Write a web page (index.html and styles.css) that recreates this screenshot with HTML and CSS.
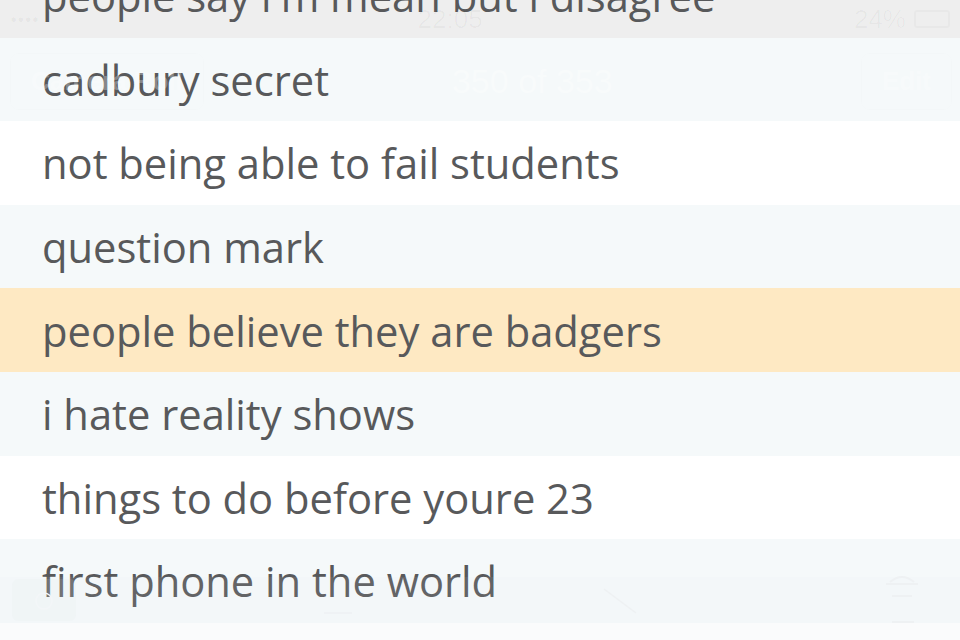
FILE: index.html
```html
<!DOCTYPE html>
<html>
<head>
<meta charset="utf-8">
<link rel="stylesheet" href="styles.css">
</head>
<body>
<div class="screen">
  <ul class="list">
    <li class="row row-status">people say i'm mean but i disagree</li>
    <li class="row row-light">cadbury secret</li>
    <li class="row row-white">not being able to fail students</li>
    <li class="row row-light">question mark</li>
    <li class="row row-highlight">people believe they are badgers</li>
    <li class="row row-light">i hate reality shows</li>
    <li class="row row-white">things to do before youre 23</li>
    <li class="row row-light">first phone in the world</li>
    <li class="row row-bottom"></li>
  </ul>

  <div class="ghost-status">
    <span class="ghost-signal">●●●●○</span>
    <span class="ghost-time">22:05</span>
    <span class="ghost-batt-wrap"><span class="ghost-pct">24%</span><span class="ghost-batt"></span></span>
  </div>

  <div class="ghost-nav">
    <span class="ghost-btn ghost-back">Camera Roll</span>
    <span class="ghost-title">350 of 353</span>
    <span class="ghost-btn ghost-edit">Edit</span>
  </div>

  <div class="ghost-toolbar">
    <span class="ghost-tool ghost-cam"><svg width="40" height="26" viewBox="0 0 40 26"><circle cx="20" cy="14" r="8" fill="none" stroke="#f3f6f8" stroke-width="1.5"/></svg></span>
    <span class="ghost-tool"><svg width="40" height="30" viewBox="0 0 40 30"><path d="M6 28 H34" stroke="#eef1f3" stroke-width="1.5"/></svg></span>
    <span class="ghost-tool"><svg width="40" height="30" viewBox="0 0 40 30"><path d="M4 4 L36 28" stroke="#eef1f3" stroke-width="1.5"/></svg></span>
    <span class="ghost-tool"><svg width="40" height="60" viewBox="0 0 40 60"><path d="M8 12 Q20 2 32 12 M4 14 H36 M10 26 H30 M10 52 H32" stroke="#eef1f3" stroke-width="2" fill="none"/></svg></span>
  </div>
</div>
</body>
</html>
```

FILE: styles.css
```css
* { box-sizing: border-box; }
html, body {
  margin: 0;
  padding: 0;
  background: #ffffff;
}
.screen {
  position: relative;
  width: 960px;
  height: 640px;
  overflow: hidden;
  font-family: "Open Sans", "Noto Sans", sans-serif;
}
.list {
  list-style: none;
  margin: -46px 0 0 0;
  padding: 0;
}
.row {
  height: 83.6px;
  padding: 0 0 0 42px;
  display: flex;
  align-items: center;
  font-size: 41.7px;
  color: #58595b;
  white-space: nowrap;
}
.row-status { background: #eeeeee; }
.row-light { background: #f5f9fa; }
.row-white { background: #ffffff; }
.row-bottom { background: #fafbfc; }
.row-highlight { background: #fee9c3; }

.ghost-status {
  position: absolute;
  top: 0;
  left: 0;
  right: 0;
  height: 38px;
  display: flex;
  align-items: center;
  justify-content: space-between;
  padding: 0 10px;
  color: rgba(0, 0, 0, 0.03);
  font-size: 26px;
  font-family: "Liberation Sans", sans-serif;
}
.ghost-signal { font-size: 12px; }
.ghost-batt-wrap { display: flex; align-items: center; gap: 8px; }
.ghost-batt {
  width: 36px;
  height: 18px;
  border: 2px solid rgba(0, 0, 0, 0.025);
  border-radius: 3px;
}
.ghost-nav {
  position: absolute;
  top: 38px;
  left: 0;
  right: 0;
  height: 86px;
  display: flex;
  align-items: center;
  justify-content: space-between;
  padding: 0 8px 0 10px;
  color: rgba(255, 255, 255, 0.3);
  font-family: "Liberation Sans", sans-serif;
  font-size: 26px;
  font-weight: bold;
}
.ghost-btn {
  border: 1px solid rgba(0, 0, 0, 0.008);
  border-radius: 8px;
  padding: 12px 20px;
}
.ghost-title { font-size: 34px; font-weight: normal; color: rgba(255,255,255,0.35); }
.ghost-toolbar {
  position: absolute;
  left: 0;
  right: 0;
  bottom: 17px;
  height: 46px;
  display: flex;
  justify-content: space-between;
  align-items: center;
  padding: 0 38px 0 12px;
  background: rgba(228, 234, 238, 0.08);
}
.ghost-tool { display: flex; align-items: center; }
.ghost-cam {
  width: 64px;
  height: 42px;
  border-radius: 6px;
  background: rgba(225, 230, 234, 0.12);
  justify-content: center;
}
```
